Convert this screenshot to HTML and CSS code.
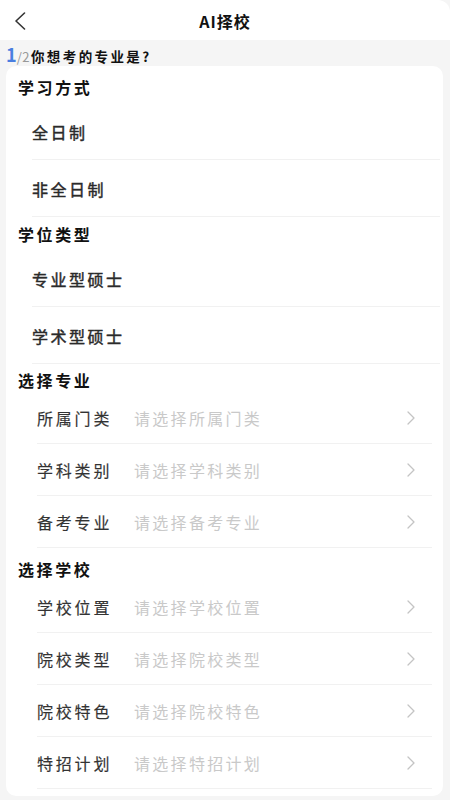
FILE: index.html
```html
<!DOCTYPE html>
<html lang="zh-CN">
<head>
<meta charset="utf-8">
<title>AI择校</title>
<link rel="stylesheet" href="styles.css">
</head>
<body>
<div class="page">
  <header class="topbar">
    <button class="back" aria-label="返回">
      <svg width="12" height="18" viewBox="0 0 12 18"><path d="M10.5 1 L2 9 L10.5 17" fill="none" stroke="#333" stroke-width="1.6" stroke-linecap="round" stroke-linejoin="round"/></svg>
    </button>
    <h1 class="title">AI择校</h1>
  </header>

  <div class="question"><span class="step">1</span><span class="total">/2</span><span class="qtext">你想考的专业是?</span></div>

  <main class="card">
    <section class="sec">
      <h2 class="sec-title">学习方式</h2>
      <div class="opt">全日制</div>
      <div class="opt">非全日制</div>
    </section>
    <section class="sec">
      <h2 class="sec-title">学位类型</h2>
      <div class="opt">专业型硕士</div>
      <div class="opt">学术型硕士</div>
    </section>
    <section class="sec">
      <h2 class="sec-title sec-title--sel">选择专业</h2>
      <div class="sel"><span class="sel-label">所属门类</span><span class="sel-ph">请选择所属门类</span><svg class="chev" width="8" height="14" viewBox="0 0 8 14"><path d="M1 1 L7 7 L1 13" fill="none" stroke="#c4c4c4" stroke-width="1.3" stroke-linecap="round" stroke-linejoin="round"/></svg></div>
      <div class="sel"><span class="sel-label">学科类别</span><span class="sel-ph">请选择学科类别</span><svg class="chev" width="8" height="14" viewBox="0 0 8 14"><path d="M1 1 L7 7 L1 13" fill="none" stroke="#c4c4c4" stroke-width="1.3" stroke-linecap="round" stroke-linejoin="round"/></svg></div>
      <div class="sel"><span class="sel-label">备考专业</span><span class="sel-ph">请选择备考专业</span><svg class="chev" width="8" height="14" viewBox="0 0 8 14"><path d="M1 1 L7 7 L1 13" fill="none" stroke="#c4c4c4" stroke-width="1.3" stroke-linecap="round" stroke-linejoin="round"/></svg></div>
    </section>
    <section class="sec">
      <h2 class="sec-title sec-title--sel2">选择学校</h2>
      <div class="sel"><span class="sel-label">学校位置</span><span class="sel-ph">请选择学校位置</span><svg class="chev" width="8" height="14" viewBox="0 0 8 14"><path d="M1 1 L7 7 L1 13" fill="none" stroke="#c4c4c4" stroke-width="1.3" stroke-linecap="round" stroke-linejoin="round"/></svg></div>
      <div class="sel"><span class="sel-label">院校类型</span><span class="sel-ph">请选择院校类型</span><svg class="chev" width="8" height="14" viewBox="0 0 8 14"><path d="M1 1 L7 7 L1 13" fill="none" stroke="#c4c4c4" stroke-width="1.3" stroke-linecap="round" stroke-linejoin="round"/></svg></div>
      <div class="sel"><span class="sel-label">院校特色</span><span class="sel-ph">请选择院校特色</span><svg class="chev" width="8" height="14" viewBox="0 0 8 14"><path d="M1 1 L7 7 L1 13" fill="none" stroke="#c4c4c4" stroke-width="1.3" stroke-linecap="round" stroke-linejoin="round"/></svg></div>
      <div class="sel"><span class="sel-label">特招计划</span><span class="sel-ph">请选择特招计划</span><svg class="chev" width="8" height="14" viewBox="0 0 8 14"><path d="M1 1 L7 7 L1 13" fill="none" stroke="#c4c4c4" stroke-width="1.3" stroke-linecap="round" stroke-linejoin="round"/></svg></div>
    </section>
  </main>
</div>
</body>
</html>
```
FILE: styles.css
```css
* { box-sizing: border-box; }
html, body { margin: 0; padding: 0; }
body {
  background: #f5f5f5;
  font-family: "Noto Sans CJK SC", "Noto Sans", "Liberation Sans", sans-serif;
  color: #222;
}
.page {
  width: 450px;
  height: 800px;
  overflow: hidden;
  display: flex;
  flex-direction: column;
}
.topbar {
  height: 40px;
  background: #fff;
  display: flex;
  align-items: center;
  justify-content: center;
  position: relative;
  border-radius: 0 12px 0 0;
}
.back {
  position: absolute;
  left: 14px;
  top: 12px;
  padding: 0;
  border: 0;
  background: none;
  display: flex;
}
.title {
  margin: 0;
  font-size: 16px;
  font-weight: 700;
  letter-spacing: 1px;
  color: #111;
  line-height: 40px;
  padding-top: 2px;
}
.question {
  height: 26px;
  display: flex;
  align-items: baseline;
  padding: 3px 0 0 6px;
  line-height: 22px;
}
.step {
  font-size: 18px;
  font-weight: 700;
  color: #4a7ee0;
}
.total {
  font-size: 13px;
  color: #999;
  letter-spacing: 0.5px;
  margin-right: 1px;
}
.qtext {
  font-size: 13.5px;
  font-weight: 700;
  color: #111;
  letter-spacing: 2.4px;
}
.card {
  margin: 0 7px 0 6px;
  background: #fff;
  border-radius: 10px;
  padding: 4px 0 7px 0;
}
.sec-title {
  margin: 0;
  padding: 5px 0 4px 12px;
  line-height: 24px;
  font-size: 16px;
  font-weight: 700;
  letter-spacing: 2.6px;
  color: #111;
}
.sec-title--sel { padding-top: 4px; padding-bottom: 0; height: 28px; }
.sec-title--sel2 { padding-top: 9px; padding-bottom: 0; height: 33px; }
.opt {
  margin-left: 26px;
  margin-right: 3px;
  height: 57px;
  display: flex;
  align-items: center;
  padding-top: 1px;
  border-bottom: 1px solid #f1f1f1;
  font-size: 16px;
  letter-spacing: 2.5px;
  color: #2a2a2a;
  -webkit-text-stroke: 0.45px #2a2a2a;
}
.sel {
  margin-left: 31px;
  margin-right: 11px;
  height: 52px;
  display: flex;
  align-items: center;
  border-bottom: 1px solid #f1f1f1;
  font-size: 16px;
  letter-spacing: 2.8px;
}
.sel-label {
  width: 97px;
  color: #333;
  -webkit-text-stroke: 0.15px #333;
}
.sel-ph {
  flex: 1;
  color: #c9c9c9;
  letter-spacing: 2.3px;
}
.chev {
  margin-right: 17px;
}
```
